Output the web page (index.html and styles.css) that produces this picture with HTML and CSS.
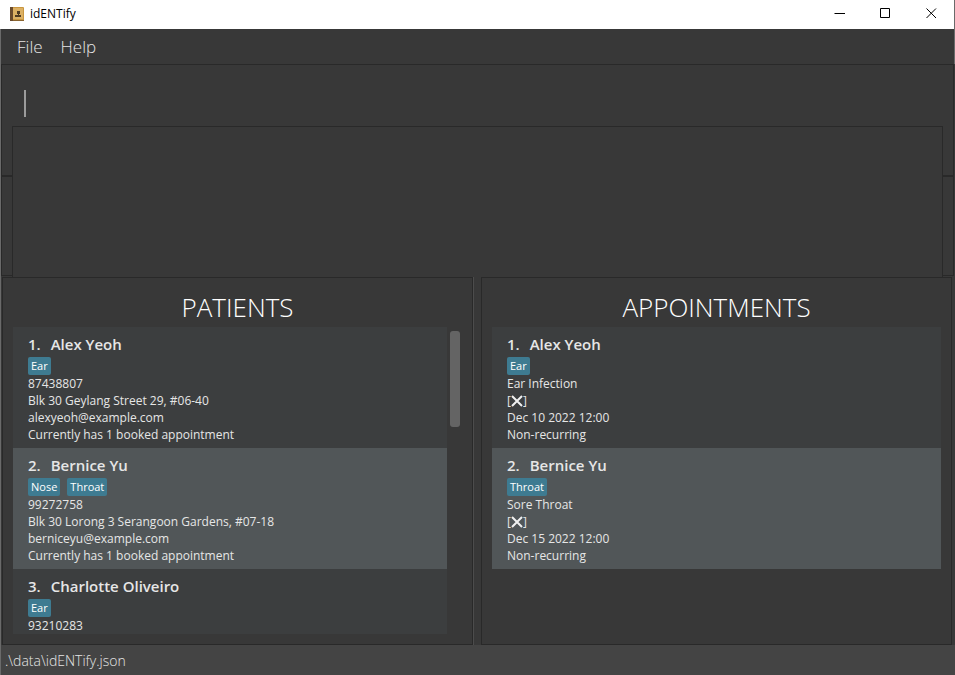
FILE: index.html
```html
<!DOCTYPE html>
<html lang="en">
<head>
<meta charset="utf-8">
<title>idENTify</title>
<link rel="stylesheet" href="styles.css">
</head>
<body>
<div class="window">
  <header class="titlebar">
    <svg class="app-icon" viewBox="0 0 14 14" aria-hidden="true">
      <rect width="14" height="14" rx="1" fill="#c9963f"/>
      <rect x="3" y="1" width="10" height="11" fill="#dcb063"/>
      <rect width="3" height="14" fill="#6a4a2c"/>
      <rect x="3" y="13" width="11" height="1" fill="#8a6430"/>
      <path d="M7 4h3v3H9v1h2v2H5V8h3V7H7z" fill="#4e3a22"/>
    </svg>
    <span class="app-name">idENTify</span>
    <div class="window-buttons">
      <button type="button" aria-label="Minimize"><svg viewBox="0 0 11 11"><path d="M.5 5.500h10.500"/></svg></button>
      <button type="button" aria-label="Maximize"><svg viewBox="0 0 11 11"><path d="M.5 .5h9v9h-9z"/></svg></button>
      <button type="button" aria-label="Close"><svg viewBox="0 0 11 11"><path d="M.5 .5l9.500 9.500M10 .5L.5 10"/></svg></button>
    </div>
  </header>
  <nav class="menubar">
    <button type="button">File</button>
    <button type="button">Help</button>
  </nav>
  <div class="command-pane">
    <span class="caret"></span>
    <input class="command" type="text" aria-label="Command">
  </div>
  <div class="result-pane">
    <textarea class="result" readonly aria-label="Result"></textarea>
  </div>
  <main class="columns">
    <section class="panel">
      <h2>PATIENTS</h2>
      <div class="scroller">
        <ul class="list">
          <li class="card">
            <h3><span>1.</span><span>Alex Yeoh</span></h3>
            <div class="tags"><span class="tag">Ear</span></div>
            <p>87438807</p>
            <p>Blk 30 Geylang Street 29, #06-40</p>
            <p>alexyeoh@example.com</p>
            <p>Currently has 1 booked appointment</p>
          </li>
          <li class="card">
            <h3><span>2.</span><span>Bernice Yu</span></h3>
            <div class="tags"><span class="tag">Nose</span><span class="tag">Throat</span></div>
            <p>99272758</p>
            <p>Blk 30 Lorong 3 Serangoon Gardens, #07-18</p>
            <p>berniceyu@example.com</p>
            <p>Currently has 1 booked appointment</p>
          </li>
          <li class="card">
            <h3><span>3.</span><span>Charlotte Oliveiro</span></h3>
            <div class="tags"><span class="tag">Ear</span></div>
            <p>93210283</p>
          </li>
        </ul>
        <div class="scrollbar"><div class="thumb"></div></div>
      </div>
    </section>
    <section class="panel">
      <h2>APPOINTMENTS</h2>
      <div class="scroller">
        <ul class="list">
          <li class="card">
            <h3><span>1.</span><span>Alex Yeoh</span></h3>
            <div class="tags"><span class="tag">Ear</span></div>
            <p>Ear Infection</p>
            <p class="mark">[<svg viewBox="0 0 12 12" role="img" aria-label="Not done"><path d="M1 1l10 10M11 1l-10 10"/></svg>]</p>
            <p>Dec 10 2022 12:00</p>
            <p>Non-recurring</p>
          </li>
          <li class="card">
            <h3><span>2.</span><span>Bernice Yu</span></h3>
            <div class="tags"><span class="tag">Throat</span></div>
            <p>Sore Throat</p>
            <p class="mark">[<svg viewBox="0 0 12 12" role="img" aria-label="Not done"><path d="M1 1l10 10M11 1l-10 10"/></svg>]</p>
            <p>Dec 15 2022 12:00</p>
            <p>Non-recurring</p>
          </li>
        </ul>
      </div>
    </section>
  </main>
  <footer class="statusbar">.\data\idENTify.json</footer>
</div>
</body>
</html>
```
FILE: styles.css
```css
* {
  box-sizing: border-box;
}

body {
  margin: 0;
  font-family: "Open Sans", "Noto Sans", sans-serif;
  color: #e6e6e6;
  background: #383838;
}

button,
input,
textarea {
  font: inherit;
  color: inherit;
  background: none;
  border: 0;
  padding: 0;
  margin: 0;
  outline: none;
}

h2,
h3,
p,
ul {
  margin: 0;
  padding: 0;
  list-style: none;
}

.window {
  display: flex;
  flex-direction: column;
  height: 100vh;
  background: #383838;
}

.titlebar {
  flex: none;
  display: flex;
  align-items: center;
  height: 29px;
  padding: 0 0 2px 10px;
  border-right: 1px solid #6a6a6a;
  background: #fff;
  color: #000;
  font-size: 12px;
}

.app-icon {
  width: 14px;
  height: 14px;
  margin-right: 6px;
}

.window-buttons {
  display: flex;
  margin-left: auto;
}

.window-buttons button {
  display: flex;
  align-items: center;
  justify-content: center;
  width: 46px;
  height: 27px;
}

.window-buttons svg {
  width: 11px;
  height: 11px;
  fill: none;
  stroke: #000;
}

.menubar {
  flex: none;
  display: flex;
  gap: 18px;
  height: 35px;
  padding: 0 16px;
  border: solid #6a6a6a;
  border-width: 0 1px;
  font-size: 17px;
  font-weight: 300;
}

.command-pane,
.result-pane {
  flex: none;
  border: 1px solid #292929;
  margin: 0 1px;
  box-shadow: -1px 0 #6a6a6a;
}

.command-pane {
  display: flex;
  align-items: flex-start;
  height: 112px;
  padding: 25px 10px 0 22px;
}

.caret {
  width: 2px;
  height: 27px;
  background: #9b9b9b;
}

.command {
  flex: 1;
  height: 27px;
  font-size: 17px;
}

.result-pane {
  display: flex;
  height: 100px;
  padding: 0 10px;
}

.result {
  position: relative;
  flex: 1;
  height: 151px;
  margin-top: -51px;
  background: #383838;
  border: 1px solid #292929;
  border-bottom: 0;
  resize: none;
}

.columns {
  flex: 1;
  min-height: 0;
  display: grid;
  grid-template-columns: 1fr 1fr;
  gap: 8px;
  padding: 1px 3px 0 2px;
  box-shadow: inset 1px 0 #6a6a6a;
}

.panel {
  display: flex;
  flex-direction: column;
  min-height: 0;
  min-width: 0;
  padding: 10px;
  border: 1px solid #292929;
}

.panel:first-child {
  box-shadow: 1px 0 #4c4c4c;
}

.panel h2 {
  flex: none;
  height: 39px;
  line-height: 39px;
  font-size: 26px;
  font-weight: 300;
  text-align: center;
  color: #fff;
}

.scroller {
  flex: 1;
  display: flex;
  min-height: 0;
}

.list {
  flex: 1;
  overflow: hidden;
}

.scrollbar {
  width: 15px;
  padding: 4px 2px 0 3px;
}

.thumb {
  height: 96px;
  border-radius: 3px;
  background: #646464;
}

.card {
  height: 121px;
  padding: 5px 15px;
  background: #3c3e3f;
}

.card:nth-child(even) {
  background: #515658;
}

.card h3 {
  display: flex;
  gap: 10px;
  height: 25px;
  line-height: 25px;
  font-size: 15px;
  font-weight: 600;
}

.tags {
  display: flex;
  gap: 7px;
}

.tag {
  height: 18px;
  padding: 0 3px;
  border-radius: 2px;
  background: #3e7b91;
  color: #fff;
  font-size: 11px;
  line-height: 18px;
}

.card p {
  height: 17px;
  line-height: 17px;
  font-size: 12px;
}

.card .mark {
  display: flex;
  align-items: center;
}

.mark svg {
  width: 12px;
  height: 12px;
  fill: none;
  stroke: #f0f0f0;
  stroke-width: 2;
}

.statusbar {
  flex: none;
  height: 30px;
  padding: 0 5px;
  background: #444;
  box-shadow: inset 1px 0 #6a6a6a;
  font-size: 14px;
  font-weight: 300;
  line-height: 31px;
}
```
